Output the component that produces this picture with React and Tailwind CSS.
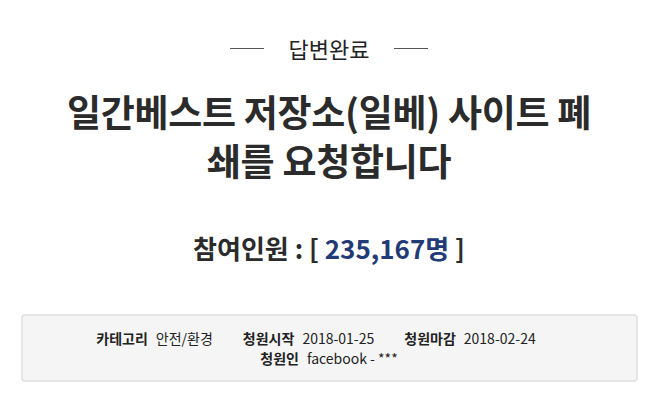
export default function App() {
  const font = { fontFamily: '"Noto Sans CJK KR", "Noto Sans", sans-serif' };
  return (
    <div className="w-[658px] h-[405px] bg-white text-[#333] flex flex-col items-center" style={font}>
      <div className="flex items-center gap-[25px] mt-[33px] h-[30px]">
        <span className="w-[34px] h-px bg-[#555]" />
        <span className="text-[22px] leading-none text-[#222]">답변완료</span>
        <span className="w-[34px] h-px bg-[#555]" />
      </div>
      <h1 className="mt-[24px] text-[37px] font-bold leading-[49px] tracking-[-0.3px] text-center text-[#2b2b2b] w-[600px]">
        일간베스트 저장소(일베) 사이트 폐<br />쇄를 요청합니다
      </h1>
      <div className="mt-[50px] text-[26px] font-bold leading-none text-[#2b2b2b]">
        참여인원 : [ <span className="text-[#223a75]">235,167명</span> ]
      </div>
      <div className="mt-[53px] w-[617px] h-[68px] rounded-[4px] border-2 border-[#e6e6e6] bg-[#f5f5f5] flex flex-col items-center justify-center gap-[1px] text-[14px] leading-[19px] text-[#222]">
        <div className="flex items-center gap-[30px] pr-[26px]">
          <span><b className="mr-[8px] font-bold">카테고리</b>안전/환경</span>
          <span><b className="mr-[8px] font-bold">청원시작</b>2018-01-25</span>
          <span><b className="mr-[8px] font-bold">청원마감</b>2018-02-24</span>
        </div>
        <div>
          <b className="mr-[8px] font-bold">청원인</b>facebook - ***
        </div>
      </div>
    </div>
  );
}
